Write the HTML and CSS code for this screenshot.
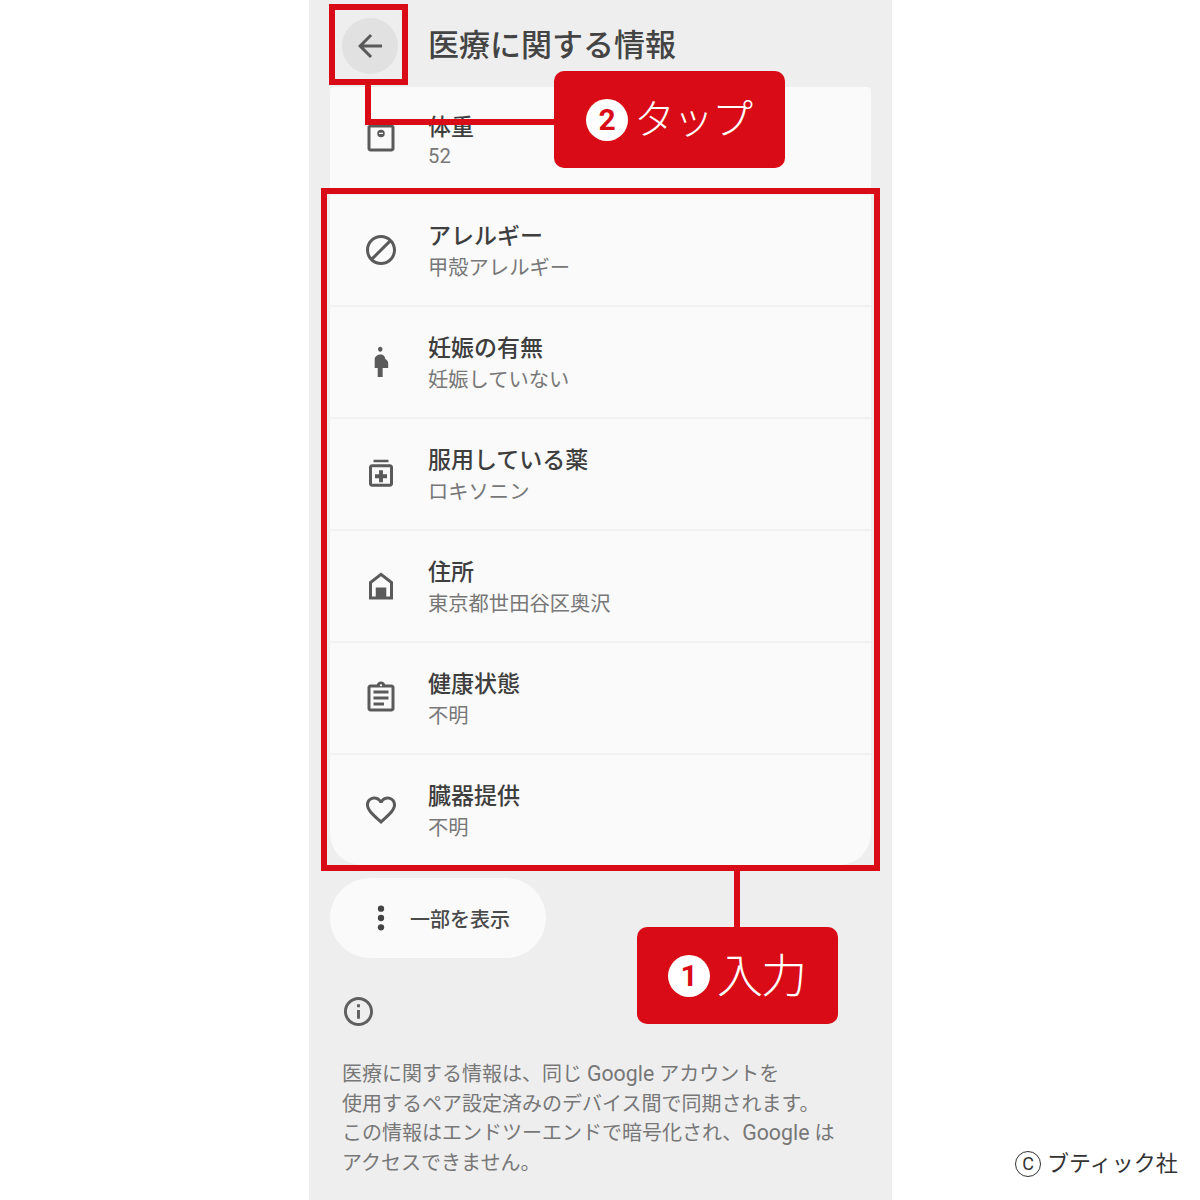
FILE: index.html
```html
<!DOCTYPE html>
<html lang="ja">
  <head>
    <meta charset="UTF-8" />
    <meta name="viewport" content="width=device-width, initial-scale=1.0" />
    <title>医療に関する情報</title>
    <link rel="stylesheet" href="styles.css">
  </head>
  <body>
    <div class="stage">
      <div class="phone">
        <header class="top-bar">
          <div class="back-btn">
            <svg class="back-icon" viewBox="0 0 24 24"><path d="M20 11H7.830l5.590-5.590L12 4l-8 8 8 8 1.410-1.410L7.830 13H20z"/></svg>
          </div>
          <h1 class="page-title">医療に関する情報</h1>
        </header>

        <div class="info-list">
          <div class="info-row first-row">
            <svg class="row-icon" viewBox="0 0 24 24"><path d="M5 3h14c1.100 0 2 .9 2 2v14c0 1.100-.9 2-2 2H5c-1.100 0-2-.9-2-2V5c0-1.100.9-2 2-2zm0 2v14h14V5zm7 1.500a2.500 2.500 0 1 1 0 5 2.500 2.500 0 0 1 0-5zM10.700 8.500v.8h2.600v-.8z" fill-rule="evenodd"/></svg>
            <div class="row-text">
              <div class="row-title">体重</div>
              <div class="row-value">52</div>
            </div>
          </div>
          <div class="info-row">
            <svg class="row-icon" viewBox="0 0 24 24"><path d="M12 2C6.480 2 2 6.480 2 12s4.480 10 10 10 10-4.480 10-10S17.520 2 12 2zM4 12c0-4.420 3.580-8 8-8 1.850 0 3.550.63 4.900 1.690L5.690 16.900C4.630 15.550 4 13.850 4 12zm8 8c-1.850 0-3.550-.63-4.900-1.690L18.310 7.100C19.370 8.450 20 10.150 20 12c0 4.420-3.580 8-8 8z"/></svg>
            <div class="row-text">
              <div class="row-title">アレルギー</div>
              <div class="row-value">甲殻アレルギー</div>
            </div>
          </div>
          <div class="info-row">
            <svg class="row-icon" viewBox="0 0 24 24"><path d="M10 3.500C10 2.500 10.700 1.800 11.500 1.800S13 2.500 13 3.500 12.300 5.200 11.500 5.200 10 4.500 10 3.500zM16.800 13c0-1.400-.8-2.500-2-3 0-1.600-1.300-3-3.100-3S7.800 8.400 7.800 10v6h2v6h3.300v-6h3.700z"/></svg>
            <div class="row-text">
              <div class="row-title">妊娠の有無</div>
              <div class="row-value">妊娠していない</div>
            </div>
          </div>
          <div class="info-row">
            <svg class="row-icon" viewBox="0 0 24 24"><path d="M17 2.500H7v1.600h10zM18 5.500H6c-1.100 0-2 .9-2 2v11c0 1.100.9 2 2 2h12c1.100 0 2-.9 2-2v-11c0-1.100-.9-2-2-2zm0 13H6v-11h12zM10.700 17.500h2.600v-2.700H16v-2.600h-2.700V9.500h-2.600v2.700H8v2.600h2.700z"/></svg>
            <div class="row-text">
              <div class="row-title">服用している薬</div>
              <div class="row-value">ロキソニン</div>
            </div>
          </div>
          <div class="info-row">
            <svg class="row-icon" viewBox="0 0 24 24"><path d="M12 3 4 9.200V21h16V9.200zm0 2.500 6 4.700V19h-2.500v-6h-7v6H6v-8.800z"/></svg>
            <div class="row-text">
              <div class="row-title">住所</div>
              <div class="row-value">東京都世田谷区奥沢</div>
            </div>
          </div>
          <div class="info-row">
            <svg class="row-icon" viewBox="0 0 24 24"><path d="M19 3h-4.180C14.400 1.840 13.300 1 12 1s-2.400.84-2.820 2H5c-1.100 0-2 .9-2 2v14c0 1.100.9 2 2 2h14c1.100 0 2-.9 2-2V5c0-1.100-.9-2-2-2zm-7-.25c.41 0 .75.34.75.75s-.34.75-.75.75-.75-.34-.75-.75.34-.75.75-.75zM19 19H5V5h14v14zM7 15h7v2H7zm0-4h10v2H7zm0-4h10v2H7z"/></svg>
            <div class="row-text">
              <div class="row-title">健康状態</div>
              <div class="row-value">不明</div>
            </div>
          </div>
          <div class="info-row last-row">
            <svg class="row-icon" viewBox="0 0 24 24"><path d="M16.500 3c-1.740 0-3.410.81-4.500 2.090C10.910 3.810 9.240 3 7.500 3 4.420 3 2 5.420 2 8.500c0 3.780 3.400 6.860 8.550 11.540L12 21.350l1.450-1.320C18.600 15.360 22 12.280 22 8.500 22 5.420 19.580 3 16.500 3zm-4.400 15.550-.1.1-.1-.1C7.140 14.240 4 11.390 4 8.500 4 6.500 5.500 5 7.500 5c1.540 0 3.040.99 3.570 2.360h1.870C13.460 5.990 14.960 5 16.500 5c2 0 3.500 1.500 3.500 3.500 0 2.890-3.140 5.740-7.900 10.050z"/></svg>
            <div class="row-text">
              <div class="row-title">臓器提供</div>
              <div class="row-value">不明</div>
            </div>
          </div>
        </div>

        <div class="more-btn">
          <svg class="more-icon" viewBox="0 0 8 28"><circle cx="4" cy="4" r="3.400"/><circle cx="4" cy="14" r="3.400"/><circle cx="4" cy="24" r="3.400"/></svg>
          <span>一部を表示</span>
        </div>

        <svg class="info-icon" viewBox="2 2 20 20"><path d="M11 7h2v2h-2zm0 4h2v6h-2zm1-9C6.480 2 2 6.480 2 12s4.480 10 10 10 10-4.480 10-10S17.520 2 12 2zm0 18c-4.410 0-8-3.590-8-8s3.590-8 8-8 8 3.590 8 8-3.590 8-8 8z"/></svg>
        <p class="note">
          医療に関する情報は、同じ <span class="latin">Google</span> アカウントを<br>
          使用するペア設定済みのデバイス間で同期されます。<br>
          この情報はエンドツーエンドで暗号化され、<span class="latin">Google</span> は<br>
          アクセスできません。
        </p>
      </div>

      <!-- Annotations -->
      <div class="mark mark-back"></div>
      <div class="line line-back-down"></div>
      <div class="line line-back-right"></div>
      <div class="callout callout-tap">
        <span class="num">2</span><span class="callout-label">タップ</span>
      </div>

      <div class="mark mark-list"></div>
      <div class="line line-list-down"></div>
      <div class="callout callout-input">
        <span class="num">1</span><span class="callout-label">入力</span>
      </div>

      <div class="credit"><span class="copy">C</span>ブティック社</div>
    </div>
  </body>
</html>
```

FILE: styles.css
```css
body {
  margin: 0;
  background: white;
  font-family: Roboto, "Noto Sans CJK JP", sans-serif;
  overflow: hidden;
}
.stage {
  position: relative;
  width: 1200px;
  height: 1200px;
  padding-left: 309px;
  box-sizing: border-box;
}
.phone {
  width: 583px;
  height: 1200px;
  background: #eeeeee;
  overflow: hidden;
}
.top-bar {
  height: 87px;
  padding: 5px 0 0 33px;
  box-sizing: border-box;
  display: flex;
  align-items: center;
  gap: 30px;
}
.back-btn {
  width: 56px;
  height: 56px;
  border-radius: 50%;
  background: #e1e1e1;
  display: flex;
  align-items: center;
  justify-content: center;
}
.back-icon {
  width: 36px;
  height: 36px;
  fill: #5a5a5a;
}
.page-title {
  margin: 0 0 7px;
  font-size: 31px;
  font-weight: 500;
  color: #444;
}
.info-list {
  margin: 0 21px;
  display: flex;
  flex-direction: column;
  gap: 2px;
  background: #f1f1f1;
  border-radius: 8px 8px 32px 32px;
}
.info-row {
  height: 110px;
  padding: 0 0 0 33px;
  box-sizing: border-box;
  display: flex;
  align-items: center;
  gap: 29px;
  background: #fafafa;
}
.first-row {
  height: 106px;
  border-radius: 4px 4px 0 0;
}
.first-row .row-icon {
  margin-bottom: 4px;
}
.first-row .row-value {
  margin-top: -2px;
}
.last-row {
  border-radius: 0 0 32px 32px;
}
.row-icon {
  width: 36px;
  height: 36px;
  fill: #5a5a5a;
  flex-shrink: 0;
}
.row-text {
  padding-top: 4px;
}
.row-title {
  font-size: 23px;
  line-height: 31px;
  font-weight: 500;
  color: #3e3e3e;
}
.row-value {
  margin-top: 1px;
  font-size: 20.300px;
  line-height: 31px;
  color: #777;
}
.more-btn {
  width: 216px;
  height: 80px;
  margin: 13px 0 0 21px;
  padding-left: 47px;
  box-sizing: border-box;
  border-radius: 40px;
  background: #fafafa;
  display: flex;
  align-items: center;
  gap: 25px;
  font-size: 20px;
  font-weight: 500;
  color: #4a4a4a;
}
.more-icon {
  width: 8px;
  height: 26px;
  fill: #444;
}
.info-icon {
  display: block;
  width: 29px;
  height: 29px;
  margin: 39px 0 0 35px;
  fill: #5f5f5f;
}
.note {
  margin: 34px 0 0 33px;
  font-size: 20px;
  line-height: 29.500px;
  color: #777;
  white-space: nowrap;
}
.latin {
  font-size: 21.300px;
  line-height: 20px;
}

/* red annotations over the screenshot */
.mark {
  position: absolute;
  box-sizing: border-box;
  border: 6px solid #d90b16;
}
.mark-back {
  left: 329px;
  top: 4px;
  width: 79px;
  height: 81px;
}
.mark-list {
  left: 321px;
  top: 188px;
  width: 559px;
  height: 683px;
}
.line {
  position: absolute;
  background: #d90b16;
}
.line-back-down {
  left: 365px;
  top: 85px;
  width: 6px;
  height: 40px;
}
.line-back-right {
  left: 365px;
  top: 119px;
  width: 190px;
  height: 6px;
}
.line-list-down {
  left: 734px;
  top: 871px;
  width: 6px;
  height: 56px;
}
.callout {
  position: absolute;
  box-sizing: border-box;
  background: #d90b16;
  border-radius: 10px;
  display: flex;
  align-items: center;
  color: white;
  font-weight: 300;
}
.callout-label {
  margin-bottom: 7px;
  letter-spacing: -2px;
}
.callout-tap {
  left: 554px;
  top: 71px;
  width: 231px;
  height: 97px;
  padding-left: 32px;
  gap: 6px;
  font-size: 41px;
}
.callout-input {
  left: 637px;
  top: 927px;
  width: 201px;
  height: 97px;
  padding-left: 31px;
  gap: 7px;
  font-size: 46px;
}
.num {
  width: 42px;
  height: 42px;
  border-radius: 50%;
  background: white;
  color: #d90b16;
  font-size: 30px;
  font-weight: 700;
  line-height: 42px;
  text-align: center;
}
.credit {
  position: absolute;
  left: 1015px;
  top: 1149px;
  display: flex;
  align-items: center;
  gap: 6px;
  font-size: 22px;
  line-height: 30px;
  color: #333;
  white-space: nowrap;
}
.copy {
  width: 26px;
  height: 26px;
  box-sizing: border-box;
  border: 1.500px solid #333;
  border-radius: 50%;
  font-size: 18px;
  line-height: 23px;
  text-align: center;
}
```
